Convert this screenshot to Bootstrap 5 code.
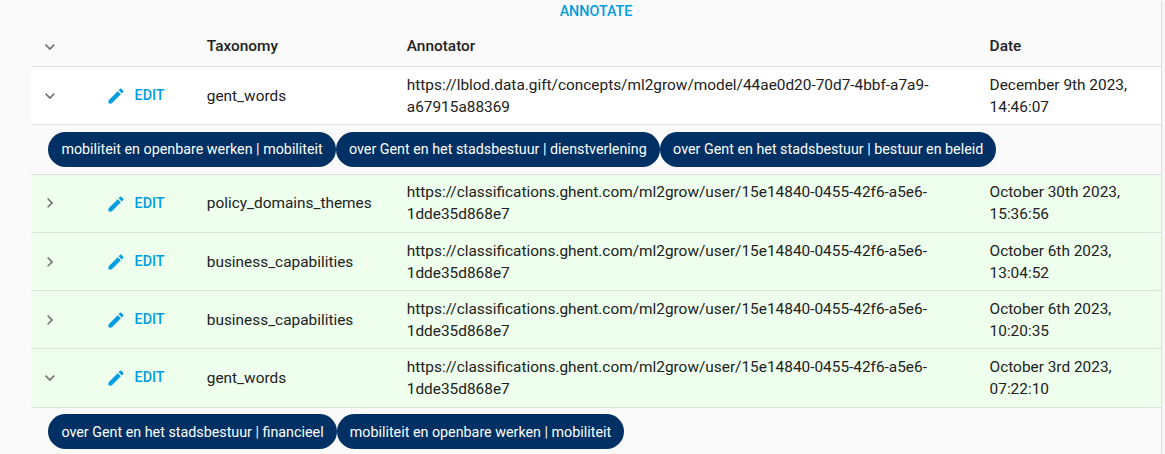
<!DOCTYPE html>
<html lang="en">
<head>
<meta charset="utf-8">
<title>Annotations</title>
<link href="https://cdn.jsdelivr.net/npm/bootstrap@5.3.0/dist/css/bootstrap.min.css" rel="stylesheet">
<style>
body{background:#fafafa;font-family:Roboto,"Liberation Sans",sans-serif;font-size:15.4px;line-height:22px;color:#212121;overflow:hidden}
.panel{margin-left:31px;width:1130px;height:454px;overflow:hidden}
.frame{width:1161px;height:454px;box-shadow:0 1px 3px rgba(0,0,0,.2),0 1px 1px rgba(0,0,0,.14)}
.top-action{height:26px;line-height:22px}
.action{color:#009de0;font-weight:500;font-size:14.3px}
.action-label{padding-bottom:2px}
.annotations{table-layout:fixed;border-collapse:separate;border-spacing:0;width:1130px}
.annotations th,.annotations td{padding:0 17.6px;border:0 solid #e0e0e0;border-bottom-width:1px;vertical-align:middle}
.annotations th{height:41px;font-weight:500}
.annotations th:first-child{padding-top:2px}
.annotations .entry td{height:58px;padding-top:1px}
.annotations .entry td.edit-cell{padding:0 16.6px}
.annotations .entry.snug td{padding-top:0;padding-bottom:1px}
.annotations .entry.snug td.edit-cell{padding-bottom:0}
.annotations .entry.tall td{height:59px;padding-top:0}
.annotations .entry.tall td.edit-cell{padding-bottom:1px}
.annotations .tags td{height:50px;padding:7px 17px 0;vertical-align:top}
.annotations .tags:last-child td{padding-top:6px}
.entry.white-row{background:#fff}
.entry.green-row{background:#eeffee}
.pill{height:35px;padding:0 13px 1px 13.4px;background:#003064;color:#fff;font-size:14.3px}
.pill + .pill{padding-left:13.2px;padding-right:13.2px}
.tags:last-child .pill{padding-bottom:0}
.toggle-icon{width:19.8px;height:19.8px;fill:#757575;margin-left:-9px}
.pencil{width:20px;height:20px;margin-right:8.8px}
</style>
</head>
<body>
<div class="frame"><main class="panel">
<div class="top-action text-center"><span class="action">ANNOTATE</span></div>
<table class="annotations">
<colgroup><col style="width:58.2px"><col style="width:100px"><col style="width:200px"><col style="width:582.8px"><col></colgroup>
<thead><tr><th data-icon="down"></th><th></th><th>Taxonomy</th><th>Annotator</th><th>Date</th></tr></thead>
<tbody id="rows"></tbody>
</table>
</main></div>
<script src="https://cdn.jsdelivr.net/npm/bootstrap@5.3.0/dist/js/bootstrap.bundle.min.js"></script>
<script>
const arrows={down:'M7.41 8.59 12 13.17l4.59-4.58L18 10l-6 6-6-6 1.41-1.41z',right:'M8.59 16.59 13.17 12 8.59 7.41 10 6l6 6-6 6-1.41-1.41z'};
const arrow=d=>`<svg class="toggle-icon d-block" viewBox="0 0 24 24"><path d="${arrows[d]}"/></svg>`;
document.querySelector('[data-icon]').innerHTML=arrow('down');
const user='https://classifications.ghent.com/ml2grow/user/15e14840-0455-42f6-a5e6-<br>1dde35d868e7';
const data=[
['white-row','down','gent_words','https://lblod.data.gift/concepts/ml2grow/model/44ae0d20-70d7-4bbf-a7a9-<br>a67915a88369','December 9th 2023,<br>14:46:07',['mobiliteit en openbare werken | mobiliteit','over Gent en het stadsbestuur | dienstverlening','over Gent en het stadsbestuur | bestuur en beleid']],
['green-row snug','right','policy_domains_themes',user,'October 30th 2023,<br>15:36:56'],
['green-row','right','business_capabilities',user,'October 6th 2023,<br>13:04:52'],
['green-row','right','business_capabilities',user,'October 6th 2023,<br>10:20:35'],
['green-row tall','down','gent_words',user,'October 3rd 2023,<br>07:22:10',['over Gent en het stadsbestuur | financieel','mobiliteit en openbare werken | mobiliteit']]];
document.getElementById('rows').innerHTML=data.map(([c,d,t,a,w,tags])=>`<tr class="entry ${c}"><td>${arrow(d)}</td><td class="edit-cell"><span class="action d-flex align-items-center"><svg class="pencil" viewBox="0 0 24 24" fill="currentColor"><path d="M3 17.25V21h3.75L17.81 9.94l-3.75-3.75L3 17.25zM20.71 7.04a.996.996 0 0 0 0-1.41l-2.34-2.34a.996.996 0 0 0-1.41 0l-1.83 1.83 3.75 3.75 1.83-1.83z"/></svg><span class="action-label">EDIT</span></span></td><td>${t}</td><td>${a}</td><td>${w}</td></tr>`+(tags?`<tr class="tags"><td colspan="5"><div class="d-flex">${tags.map(x=>`<span class="pill rounded-pill d-flex align-items-center text-nowrap">${x}</span>`).join('')}</div></td></tr>`:'')).join('');
</script>
</body>
</html>
